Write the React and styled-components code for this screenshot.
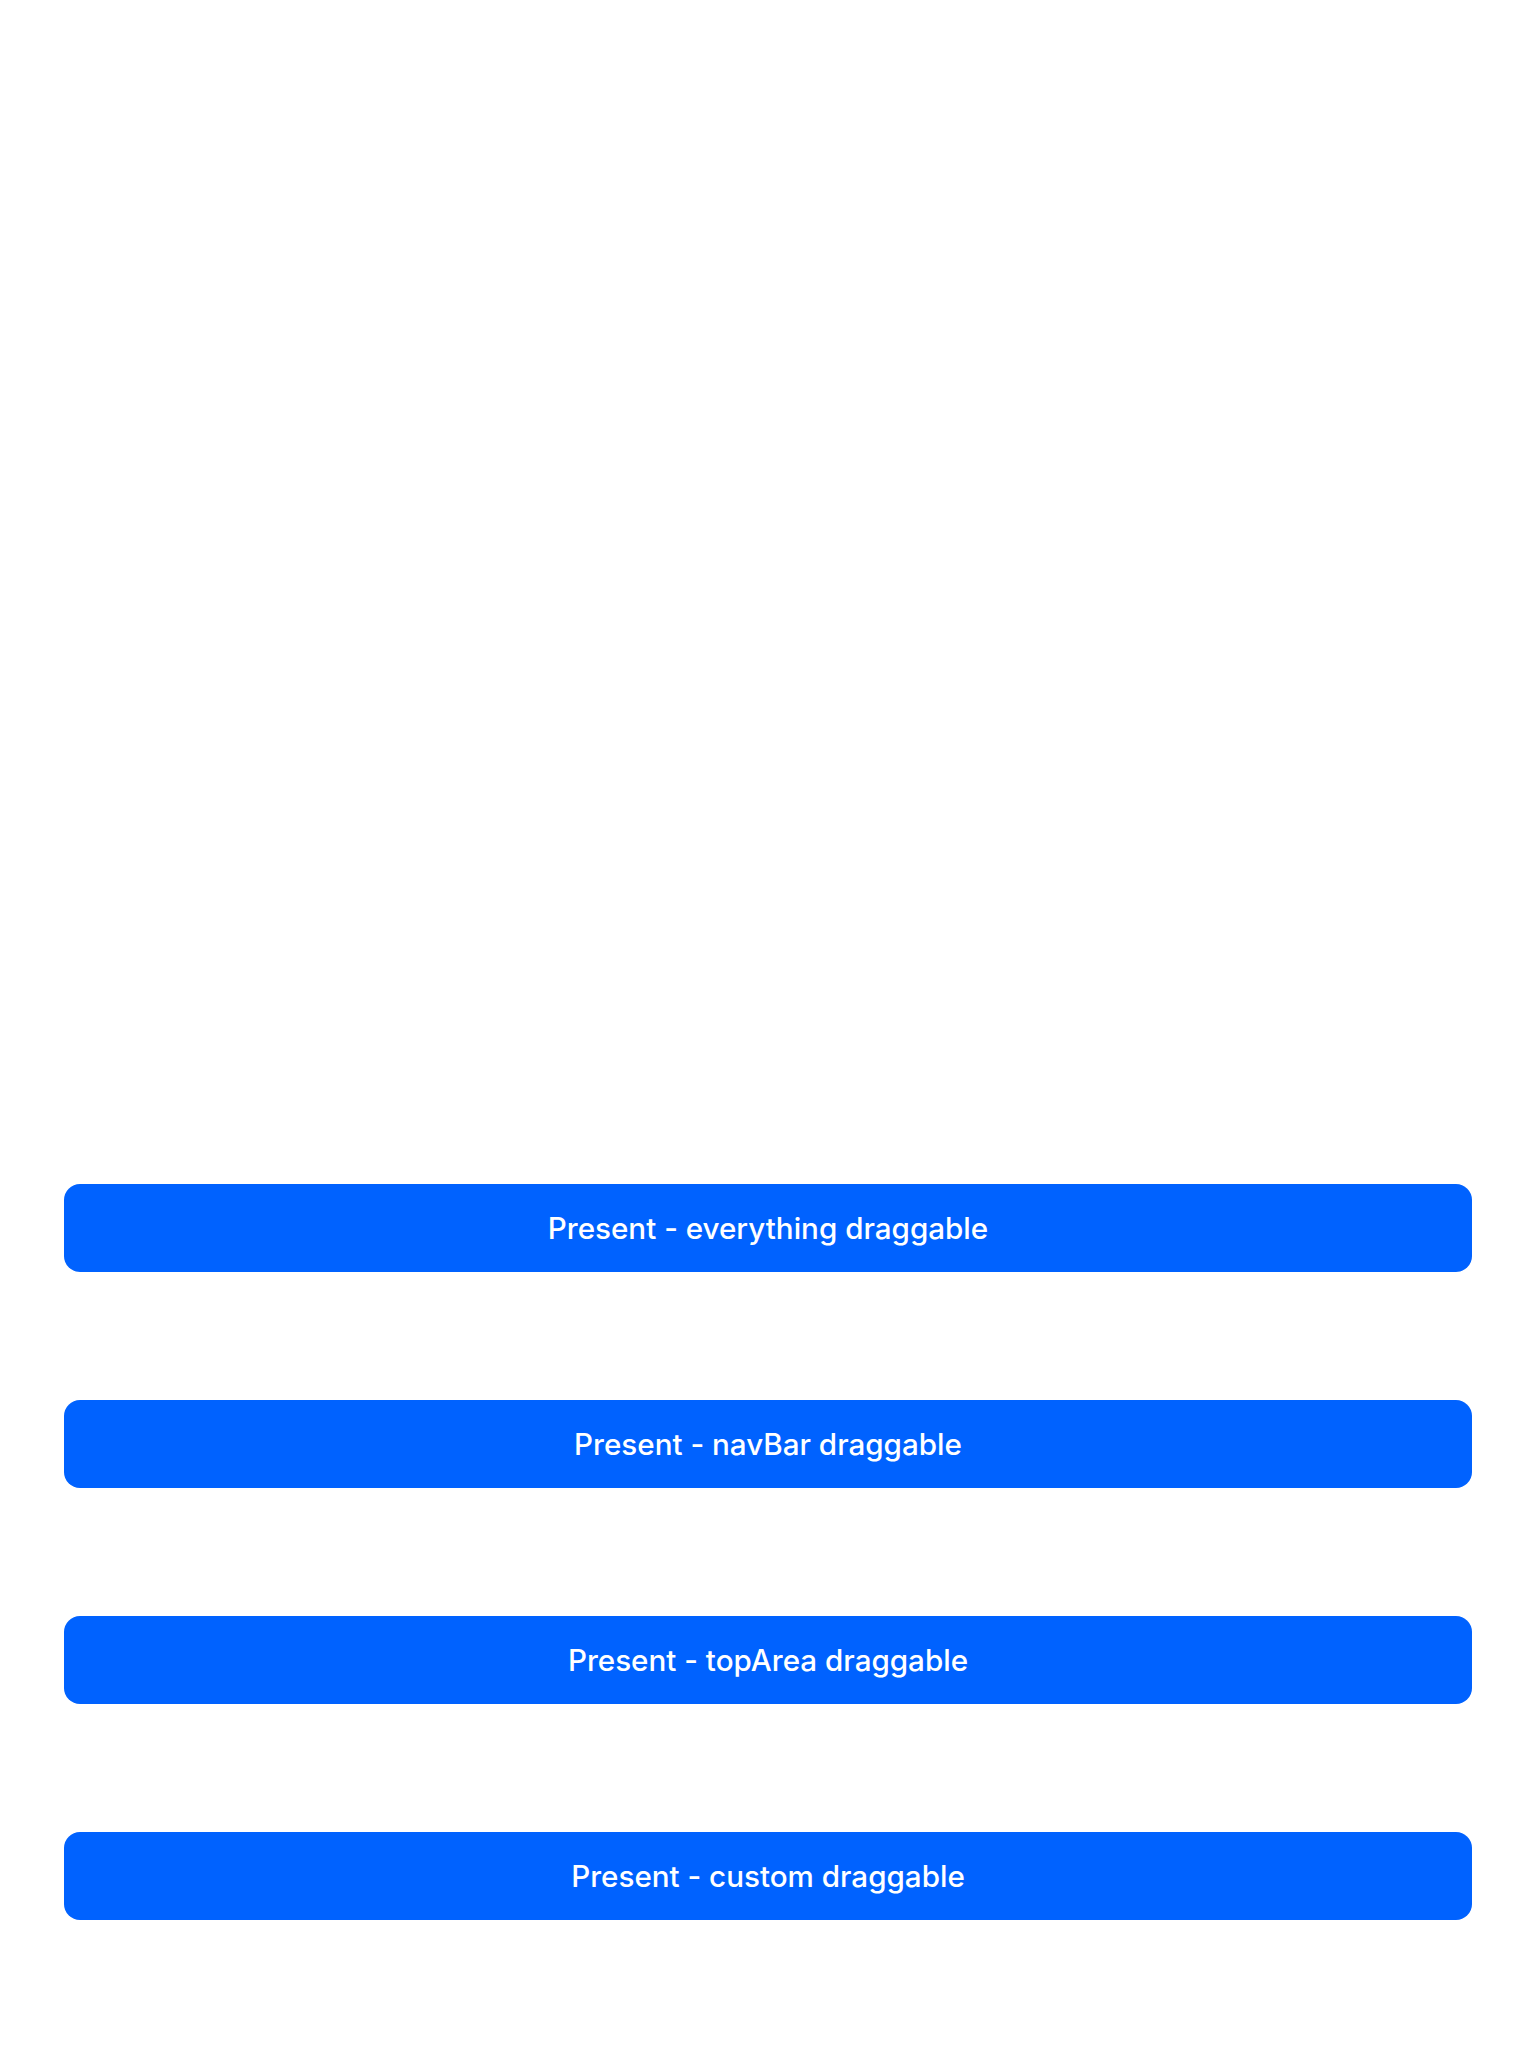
import styled, { createGlobalStyle } from 'styled-components';

const GlobalStyle = createGlobalStyle`
  html, body {
    margin: 0;
    padding: 0;
    background: #ffffff;
  }
  body {
    font-family: Inter, "Noto Sans", "Liberation Sans", sans-serif;
  }
`;

const Page = styled.div`
  height: 2048px;
  box-sizing: border-box;
  display: flex;
  flex-direction: column;
  justify-content: flex-end;
  gap: 128px;
  padding: 0 64px 128px;
  background: #ffffff;
`;

const PresentButton = styled.button`
  height: 88px;
  width: 100%;
  border: none;
  border-radius: 16px;
  background: #0062ff;
  color: #ffffff;
  font-family: Inter, "Noto Sans", "Liberation Sans", sans-serif;
  font-size: 29.6px;
  font-weight: 500;
  cursor: pointer;
  display: flex;
  align-items: center;
  justify-content: center;
`;

const options = ['everything', 'navBar', 'topArea', 'custom'];

const App = () => {
  return (
    <>
      <GlobalStyle />
      <Page>
        {options.map((opt) => (
          <PresentButton key={opt}>Present - {opt} draggable</PresentButton>
        ))}
      </Page>
    </>
  );
};

export default App;
